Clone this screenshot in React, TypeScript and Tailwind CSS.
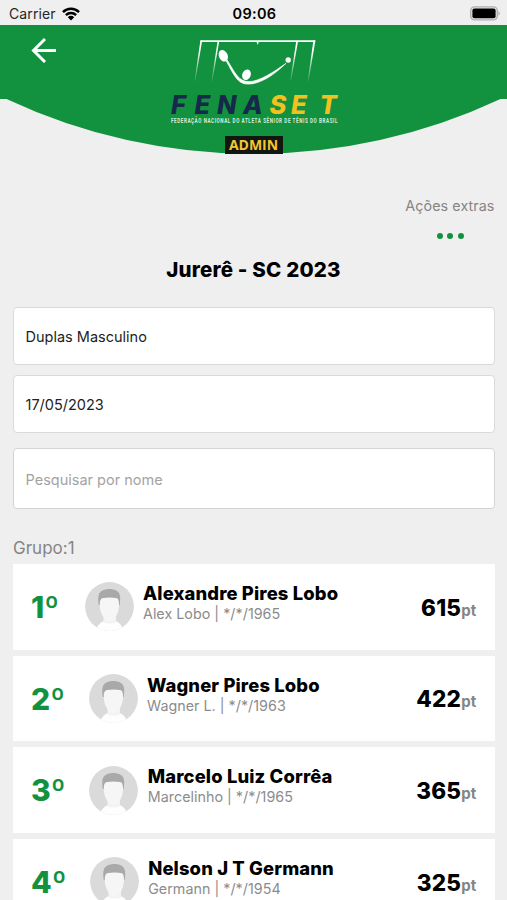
import clsx from 'clsx'

type Player = {
	rank: number
	name: string
	info: string
	points: number
	rankWidth: string
}

const players: Player[] = [
	{ rank: 1, name: 'Alexandre Pires Lobo', info: 'Alex Lobo | */*/1965', points: 615, rankWidth: 'w-[53.5px]' },
	{ rank: 2, name: 'Wagner Pires Lobo', info: 'Wagner L. | */*/1963', points: 422, rankWidth: 'w-[57.5px]' },
	{ rank: 3, name: 'Marcelo Luiz Corrêa', info: 'Marcelinho | */*/1965', points: 365, rankWidth: 'w-[58.3px]' },
	{ rank: 4, name: 'Nelson J T Germann', info: 'Germann | */*/1954', points: 325, rankWidth: 'w-[58.7px]' },
]

function StatusBar () {
	return (
		<div className="h-[25px] shrink-0 grid grid-cols-3 items-center pl-[9px] pr-[7px] pt-[2px] text-black">
			<div className="flex items-center gap-[6px] text-[14px] text-neutral-800">
				<span className="tracking-[0.1px]">Carrier</span>
				<svg className="w-[18px] h-[14px]" viewBox="0 0 18 14" fill="none">
					<path d="M1 5.1a11.4 11.4 0 0 1 16 0" stroke="black" strokeWidth="2.5" />
					<path d="M3.9 8.1a7.3 7.3 0 0 1 10.2 0" stroke="black" strokeWidth="2.5" />
					<path d="M9 13.4 5.8 10.2a4.5 4.5 0 0 1 6.4 0z" fill="black" />
				</svg>
			</div>
			<div className="text-center text-[14.5px] font-semibold tracking-[0.3px]">09:06</div>
			<svg className="w-[30px] h-[15px] justify-self-end" viewBox="0 0 30 15">
				<rect x="0.7" y="0.9" width="26.6" height="13" rx="3.8" fill="#e8e8e8" stroke="#b0b0b0" strokeWidth="1.4" />
				<rect x="2.4" y="2.6" width="23.2" height="9.6" rx="2" fill="black" />
				<path d="M28.5 5.2c1.6.8 1.6 3.6 0 4.4z" fill="#a3a3a3" />
			</svg>
		</div>
	)
}

function Logo () {
	return (
		<svg className="w-[190px] h-[94px] overflow-visible" viewBox="159 36 190 94">
			<defs>
				<linearGradient id="post" gradientUnits="userSpaceOnUse" x1="0" y1="40" x2="0" y2="81">
					<stop offset="0.3" stopColor="white" />
					<stop offset="1" stopColor="white" stopOpacity="0.1" />
				</linearGradient>
			</defs>
			{/* net */}
			<path d="M200.5 41.2H315.2" stroke="white" strokeWidth="1.8" />
			<path d="M200.4 40.4h1.8L195.3 81h-.8z M217.6 41h1.7L212.3 81h-.8z M296.3 41h1.8L291.2 80h-.9z M313.4 40.4h2L308.6 81h-.9z" fill="url(#post)" />
			<path d="M256.2 41h2.8l-1.2 4z" fill="white" />
			{/* rackets and ball */}
			<ellipse cx="223.3" cy="55.8" rx="4.4" ry="6" transform="rotate(-24 223.3 55.8)" fill="white" />
			<ellipse cx="246.5" cy="74.8" rx="4.2" ry="5.4" transform="rotate(24 246.5 74.8)" fill="white" />
			<circle cx="288.2" cy="60" r="2.7" fill="white" />
			<path d="M226.1 60.7C234 75 237.5 83.9 247.5 84.1C260.5 84.3 274.5 74.5 286 63.3C276.5 70.2 259 82.3 248 81.6C239 81 236 74.8 227.2 60z" fill="white" stroke="white" strokeWidth="0.7" />
			<g fontFamily="Inter, sans-serif" fontWeight="800" fontStyle="italic" fontSize="25.5">
				<text x="171 194.5 217 243" y="113.6" fill="#16294a">FENA</text>
				<text x="269.5 291 319.5" y="113.6" fill="#f3c11f">SET</text>
			</g>
			<text x="171" y="122.8" textLength="167" lengthAdjust="spacingAndGlyphs" fontFamily="Roboto, sans-serif" fontWeight="700" fontSize="6.4" letterSpacing="0.8" fill="#d8ecdc">
				FEDERAÇÃO NACIONAL DO ATLETA SÊNIOR DE TÊNIS DO BRASIL
			</text>
		</svg>
	)
}

function Header () {
	return (
		<header className="relative h-[130px] shrink-0">
			<svg className="absolute inset-x-0 top-0 w-full h-[130px]" viewBox="0 25 507 130" preserveAspectRatio="none">
				<path d="M0 25H507V99H500.5A582 582 0 0 1 6.5 99H0z" fill="#12923f" />
			</svg>
			<div className="relative flex flex-col items-center pt-[11px]">
				<Logo />
				<span className="mt-[6px] flex h-[18px] w-[58px] items-center justify-center bg-[#121611] font-['Open_Sans',sans-serif] text-[14px] leading-none font-bold text-[#f6c62f]">ADMIN</span>
			</div>
			<button className="absolute left-[31px] top-[12px]" aria-label="Voltar">
				<svg className="w-[26px] h-[26px]" viewBox="0 0 26 26" fill="none" stroke="white" strokeWidth="3">
					<path d="M25 13.5H3M14 2 2.5 13.5 14 25" />
				</svg>
			</button>
		</header>
	)
}

function Avatar () {
	return (
		<svg className="w-[49px] h-[49px] shrink-0" viewBox="0 0 49 49">
			<defs>
				<clipPath id="round">
					<circle cx="24.5" cy="24.5" r="24.4" />
				</clipPath>
			</defs>
			<g clipPath="url(#round)">
				<rect width="49" height="49" fill="#dadada" />
				<path d="M10.5 49c.5-3 2.5-6 5-8l2-1.5h14.5l2 1.5c2.5 2 4 5 4.500 8z" fill="#fefefe" />
				<path d="M18.5 34h12.500v6c-2 2-10.500 2-12.500 0z" fill="#f3f3f3" />
				<path d="M13.700 23c-1.200-9 0-13 3.800-14.500 4-2 10-2 13.500 0 4 1.500 5 6 3.700 14.500z" fill="#a9a9a9" />
				<path d="M14.800 22c.2-4 1-5.500 3.500-6 4-.8 8.500-.8 12.500 0 2.500.5 3 2 3.200 6 .4 7.500-3.500 16-9.500 17.500-6-1.500-10.100-10-9.700-17.500z" fill="#f6f6f6" />
			</g>
		</svg>
	)
}

function PlayerRow ({ rank, name, info, points, rankWidth }: Player) {
	return (
		<li className="flex h-[85.7px] shrink-0 items-center bg-white pl-[18.5px] pr-[18px]">
			<span className={clsx('shrink-0 text-[30px] leading-none font-extrabold text-[#12923f]', rankWidth)}>{rank}º</span>
			<Avatar />
			<div className="ml-[9.5px] flex-1 pb-[8px] whitespace-nowrap">
				<p className="-mt-px mb-px text-[18.4px] leading-[22px] font-extrabold tracking-[0.14px] text-black">{name}</p>
				<p className="text-[14.3px] leading-[18px] tracking-[0.02px] text-[#8c8c8c]">{info}</p>
			</div>
			<p className="pt-[2px] text-[22.5px] leading-none font-extrabold tracking-[0.2px] text-black">
				{points}<span className="text-[15px] font-bold text-[#858585]">pt</span>
			</p>
		</li>
	)
}

export default function App () {
	return (
		<div className="flex h-[900px] w-full flex-col overflow-hidden bg-[#efefef] font-['Inter',sans-serif]">
			<StatusBar />
			<Header />
			<main className="flex flex-col px-[12.5px]">
				<div className="mt-[42px] flex flex-col items-end">
					<span className="text-[14.3px] leading-[18px] tracking-[0.08px] text-[#858585]">Ações extras</span>
					<button className="mt-[18px] mr-[31px] flex gap-[4.3px]" aria-label="Ações extras">
						<i className="size-[6px] rounded-full bg-[#12923f]"></i>
						<i className="size-[6px] rounded-full bg-[#12923f]"></i>
						<i className="size-[6px] rounded-full bg-[#12923f]"></i>
					</button>
				</div>
				<h1 className="mt-[18px] text-center text-[20.5px] leading-[26px] font-extrabold tracking-[0.18px] text-black">Jurerê - SC 2023</h1>
				<div className="mt-[24px] flex h-[58px] items-center rounded-[4px] border border-[#dadada] bg-white px-[12px] pt-px text-[14.5px] text-[#222]">Duplas Masculino</div>
				<div className="mt-[10px] flex h-[58px] items-center rounded-[4px] border border-[#dadada] bg-white px-[12px] pt-px text-[14.5px] text-[#222]">17/05/2023</div>
				<input className="mt-[15px] h-[61px] rounded-[4px] border border-[#d4d4d4] bg-white px-[12px] pt-[2px] text-[14.5px] placeholder:text-[#a3a3a3]" placeholder="Pesquisar por nome" />
				<h2 className="mt-[28px] pl-[0.5px] text-[17px] leading-[22px] text-[#858585]">Grupo:1</h2>
				<ul className="mt-[5px] flex flex-col gap-[6px]">
					{players.map((player) => (
						<PlayerRow key={player.rank} {...player} />
					))}
				</ul>
			</main>
		</div>
	)
}
